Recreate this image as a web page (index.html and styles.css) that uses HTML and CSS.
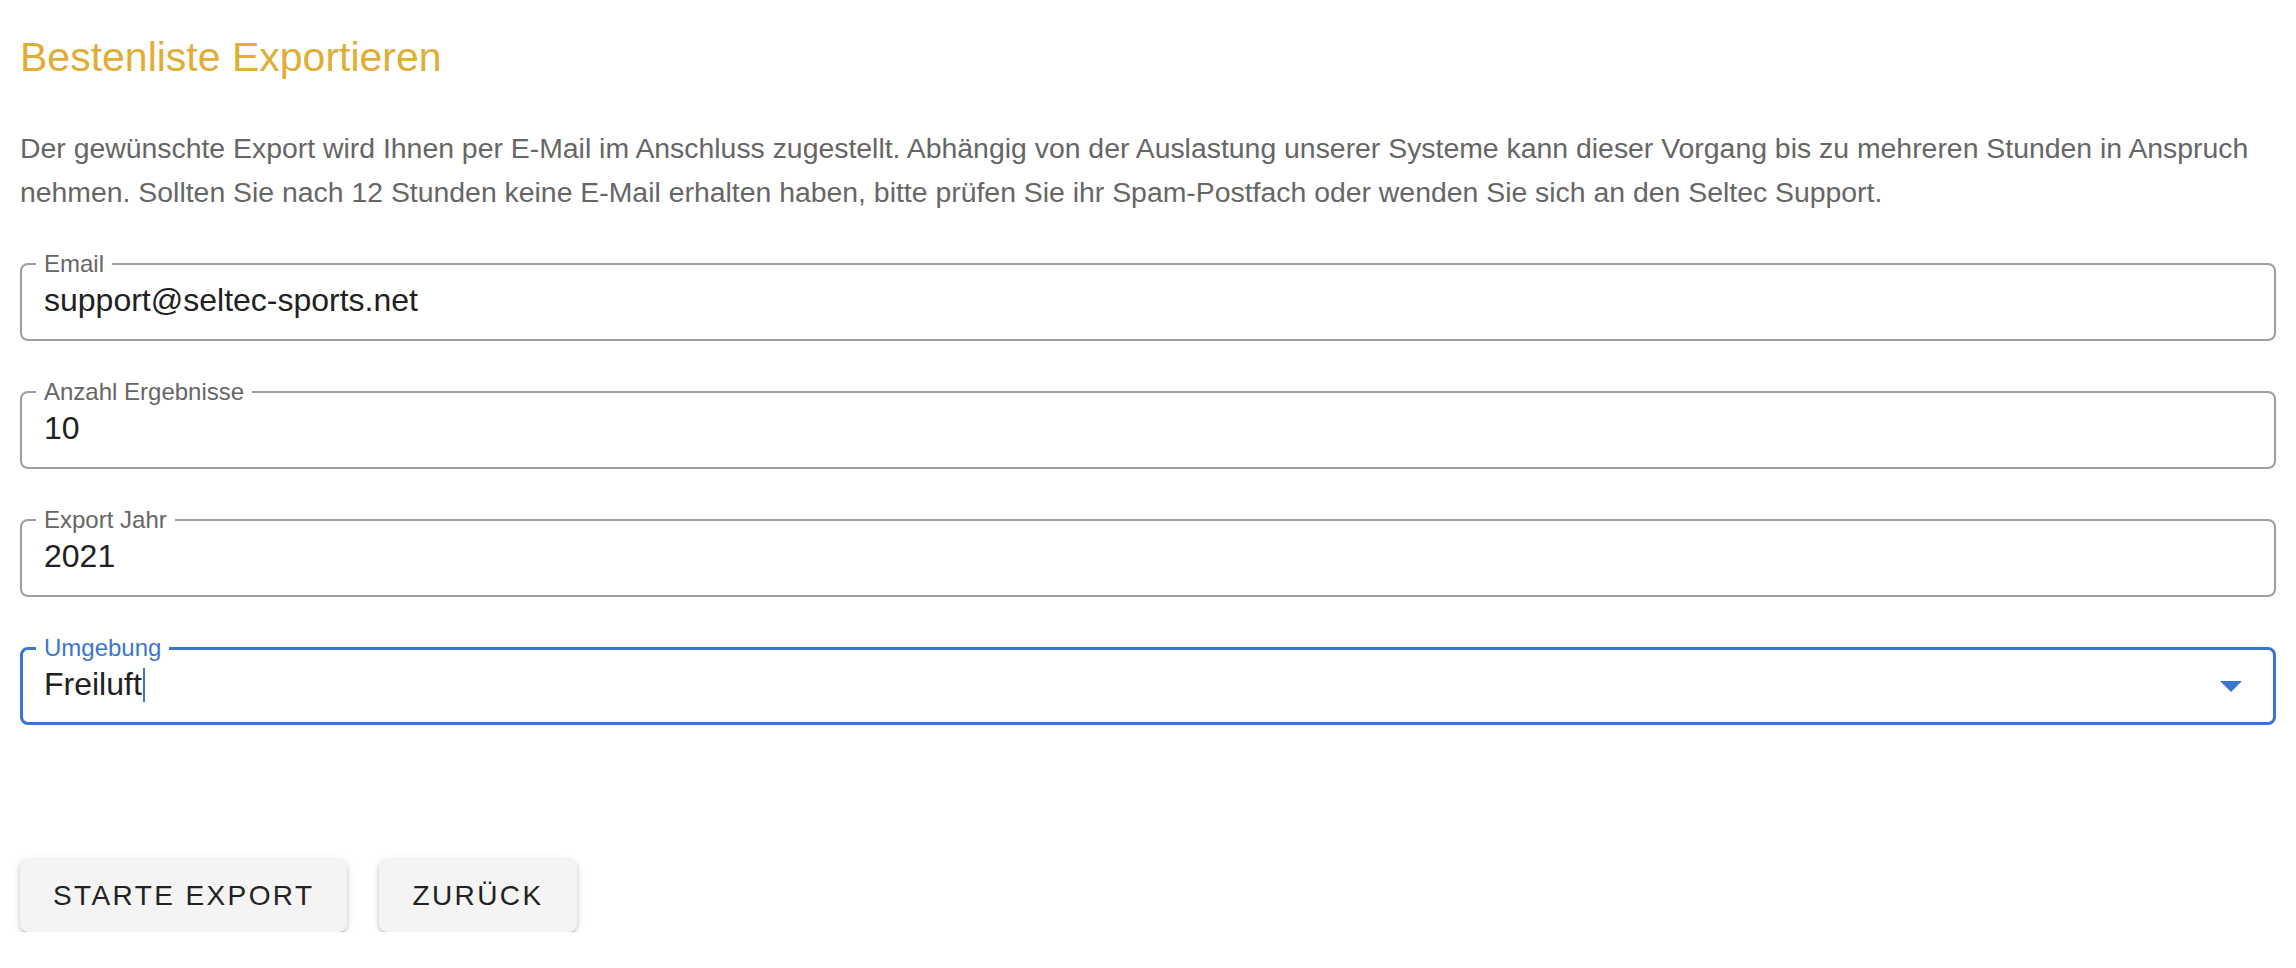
FILE: index.html
```html
<!DOCTYPE html>
<html lang="de">
<head>
    <meta charset="UTF-8">
    <meta name="viewport" content="width=device-width, initial-scale=1.0">
    <title>Bestenliste Exportieren</title>
    <link rel="stylesheet" href="styles.css">
</head>
<body>

<div id="container">
    <h1 class="title">Bestenliste Exportieren</h1>

    <p class="intro">Der gewünschte Export wird Ihnen per E-Mail im Anschluss zugestellt. Abhängig von der Auslastung unserer Systeme kann dieser Vorgang bis zu mehreren Stunden in Anspruch nehmen. Sollten Sie nach 12 Stunden keine E-Mail erhalten haben, bitte prüfen Sie ihr Spam-Postfach oder wenden Sie sich an den Seltec Support.</p>

    <form class="export-form">
        <div class="field">
            <label class="field-label">Email</label>
            <span class="field-value">support@seltec-sports.net</span>
        </div>

        <div class="field">
            <label class="field-label">Anzahl Ergebnisse</label>
            <span class="field-value">10</span>
        </div>

        <div class="field">
            <label class="field-label">Export Jahr</label>
            <span class="field-value">2021</span>
        </div>

        <div class="field field-focused">
            <label class="field-label">Umgebung</label>
            <span class="field-value">Freiluft<span class="caret"></span></span>
            <svg class="select-arrow" width="22" height="11" viewBox="0 0 22 11">
                <path d="M0 0 L22 0 L11 11 Z" fill="#3a76cc"/>
            </svg>
        </div>
    </form>

    <div class="actions">
        <button type="button" class="btn">Starte Export</button>
        <button type="button" class="btn">Zurück</button>
    </div>
</div>

</body>
</html>
```

FILE: styles.css
```css
body {
    margin: 0;
    background: #fff;
    font-family: "Liberation Sans", Arial, sans-serif;
}
#container {
    padding: 33px 20px 0 20px;
}
.title {
    margin: 0;
    font-size: 41px;
    line-height: 48px;
    font-weight: normal;
    color: #e0ae36;
}
.intro {
    margin: 45px 0 0 0;
    font-size: 28.4px;
    line-height: 44px;
    color: #666;
}
.export-form {
    display: flex;
    flex-direction: column;
    gap: 50px;
    margin-top: 49px;
}
.field {
    position: relative;
    display: flex;
    align-items: center;
    height: 78px;
    box-sizing: border-box;
    border: 2px solid #9e9e9e;
    border-radius: 8px;
    padding: 0 22px;
}
.field-label {
    position: absolute;
    top: -13px;
    left: 14px;
    padding: 0 8px 0 8px;
    background: #fff;
    font-size: 24px;
    line-height: 24px;
    color: #666;
}
.field-value {
    font-size: 32px;
    line-height: 40px;
    color: #212121;
    margin-top: -4px;
}
.field-focused {
    border: 3px solid #3a76cc;
    padding: 0 21px;
}
.field-focused .field-label {
    top: -14px;
    left: 13px;
    color: #3a76cc;
}
.caret {
    display: inline-block;
    width: 2px;
    height: 34px;
    background: #3a76cc;
    vertical-align: -7px;
    margin-left: 1px;
}
.select-arrow {
    margin-left: auto;
    margin-right: 10px;
}
.actions {
    display: flex;
    gap: 32px;
    margin-top: 135px;
}
.btn {
    height: 72px;
    padding: 0 33px;
    border: none;
    border-radius: 8px;
    background: #f4f4f4;
    color: #222;
    font-family: "Liberation Sans", Arial, sans-serif;
    font-size: 28px;
    letter-spacing: 2.4px;
    text-transform: uppercase;
    box-shadow: 0 3px 2px -2px rgba(0, 0, 0, 0.25), 0 2px 4px 0 rgba(0, 0, 0, 0.14), 0 1px 8px 0 rgba(0, 0, 0, 0.12);
}
```
